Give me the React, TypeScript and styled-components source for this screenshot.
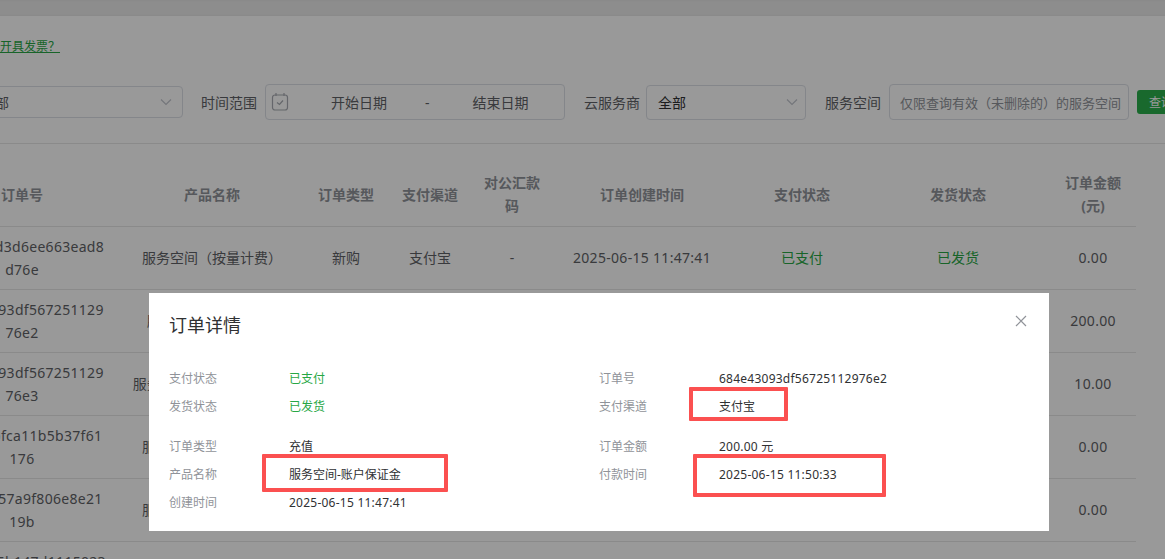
import React from "react";
import styled, { createGlobalStyle } from "styled-components";

const Global = createGlobalStyle`
  html, body { margin: 0; padding: 0; background: #fff; }
  body { font-family: "Noto Sans", "Noto Sans CJK SC", sans-serif; color: #606266; }
`;

const Page = styled.div`
  position: relative;
  width: 1165px;
  height: 559px;
  overflow: hidden;
  background: #fff;
`;
const Content = styled.div`
  width: 1212px;
  margin-left: -76px;
`;
const TopBar = styled.div`
  height: 16px;
  margin-left: -10px;
  width: 1300px;
  background: linear-gradient(#e4e4e4 0, #ececec 2px, #ececec 13px, #e6e6e6 16px);
`;
const LinkRow = styled.div`
  display: flex;
  align-items: center;
  height: 20px;
  margin-top: 20px;
  padding-left: 52px;
  font-size: 12px;
`;
const HelpLink = styled.a`
  color: #28a745;
  text-decoration: underline;
`;
const FilterBar = styled.div`
  display: flex;
  align-items: center;
  height: 88px;
  width: 1300px;
  box-sizing: border-box;
  padding: 5px 0 0 45px;
  border-bottom: 1px solid #e6e6e6;
  font-size: 14px;
`;
const Label = styled.span<{ $left: number }>`
  margin-left: ${(p) => p.$left}px;
  white-space: nowrap;
  line-height: 20px;
  position: relative;
  top: 1px;
`;
const SelectBox = styled.div<{ $w: number; $h: number; $pr: number; $left?: number; $dark?: boolean }>`
  display: flex;
  align-items: center;
  justify-content: space-between;
  box-sizing: border-box;
  width: ${(p) => p.$w}px;
  height: ${(p) => p.$h}px;
  margin-left: ${(p) => p.$left ?? 0}px;
  padding: 0 ${(p) => p.$pr}px 0 11px;
  border: 1px solid #dcdfe6;
  border-radius: 4px;
  color: ${(p) => (p.$dark ? "#303133" : "#606266")};
  background: #fff;
`;
const DateBox = styled.div`
  display: flex;
  align-items: center;
  box-sizing: border-box;
  width: 300px;
  height: 36px;
  margin-left: 8px;
  padding-left: 5px;
  border: 1px solid #dcdfe6;
  border-radius: 4px;
`;
const DateText = styled.span<{ $left: number }>`
  margin-left: ${(p) => p.$left}px;
  white-space: nowrap;
`;
const SearchInput = styled.div`
  display: flex;
  align-items: center;
  box-sizing: border-box;
  width: 240px;
  height: 36px;
  margin-left: 8px;
  padding-left: 10px;
  border: 1px solid #dcdfe6;
  border-radius: 4px;
  color: #909399;
  font-size: 13px;
  white-space: nowrap;
  overflow: hidden;
`;
const SearchButton = styled.button`
  flex: none;
  width: 56px;
  height: 24px;
  margin-left: 8px;
  padding: 0 0 0 12px;
  border: 0;
  border-radius: 3px;
  background: #2ab04c;
  color: #fff;
  font: inherit;
  font-size: 12px;
  text-align: left;
`;
const Table = styled.table`
  width: 1212px;
  margin-top: 19px;
  table-layout: fixed;
  border-collapse: collapse;
  font-size: 14px;
`;
const HeadCell = styled.th<{ $w: number; $first?: boolean }>`
  width: ${(p) => p.$w}px;
  height: 63px;
  padding: 0 6px 0 ${(p) => (p.$first ? 12 : 6)}px;
  box-sizing: border-box;
  border-bottom: 1px solid #e6e6e6;
  color: #909399;
  font-weight: 700;
  line-height: 23px;
  text-align: center;
`;
const Row = styled.tr`
  height: 63px;
`;
const Cell = styled.td<{ $green?: boolean; $num?: boolean; $first?: boolean }>`
  padding: 0 0 0 ${(p) => (p.$first ? 6 : 0)}px;
  box-sizing: border-box;
  border-bottom: 1px solid #e6e6e6;
  color: ${(p) => (p.$green ? "#28a745" : "#606266")};
  line-height: 23px;
  letter-spacing: ${(p) => (p.$num ? "0.3px" : "0")};
  text-align: center;
  white-space: nowrap;
`;
const Overlay = styled.div`
  position: absolute;
  inset: 0;
  background: rgba(0, 0, 0, 0.4);
`;
const Modal = styled.div`
  position: absolute;
  left: 149px;
  top: 293px;
  width: 900px;
  height: 238px;
  box-sizing: border-box;
  padding: 20px 20px 0;
  background: #fff;
`;
const ModalTitle = styled.h2`
  margin: 0;
  height: 24px;
  font-size: 18px;
  font-weight: 400;
  line-height: 24px;
  color: #303133;
`;
const CloseButton = styled.button`
  position: absolute;
  top: 20px;
  right: 20px;
  display: flex;
  width: 16px;
  height: 16px;
  padding: 0;
  border: 0;
  background: none;
`;
const DetailGrid = styled.div`
  display: grid;
  grid-template-columns: 430px 430px;
  margin-top: 27px;
`;
const DetailGroup = styled.div<{ $gap?: boolean }>`
  display: flex;
  flex-direction: column;
  margin-top: ${(p) => (p.$gap ? 12 : 0)}px;
`;
const DetailRow = styled.div`
  display: flex;
  height: 28px;
  align-items: center;
  font-size: 12px;
`;
const DetailLabel = styled.span`
  width: 120px;
  color: #909399;
`;
const DetailValue = styled.span<{ $green?: boolean; $num?: boolean }>`
  color: ${(p) => (p.$green ? "#28a745" : "#303133")};
  letter-spacing: ${(p) => (p.$num ? "0.24px" : "0")};
`;
const Mark = styled.div<{ $x: number; $y: number; $w: number; $h: number }>`
  position: absolute;
  left: ${(p) => p.$x}px;
  top: ${(p) => p.$y}px;
  width: ${(p) => p.$w}px;
  height: ${(p) => p.$h}px;
  box-sizing: border-box;
  border: 4px solid #fb5050;
  border-radius: 1px;
`;

const Chevron = () => (
  <svg width="20" height="20" viewBox="0 0 20 20" fill="none" stroke="#c0c4cc" strokeWidth="1.1">
    <path d="M5 7.5 L10 12.5 L15 7.5" />
  </svg>
);
const CalendarIcon = () => (
  <svg width="18" height="20" viewBox="0 0 18 20" fill="none" stroke="#a8abb2" strokeWidth="1.2">
    <rect x="1.5" y="3" width="15" height="15" rx="2.5" />
    <path d="M5 1v3M13 1v3" />
    <path d="M6 10.5 L8.5 12.5 L12 8.5" />
  </svg>
);

const heads: [string, number][] = [
  ["订单号", 190],
  ["产品名称", 196],
  ["订单类型", 72],
  ["支付渠道", 96],
  ["对公汇款码", 68],
  ["订单创建时间", 192],
  ["支付状态", 128],
  ["发货状态", 184],
  ["订单金额(元)", 86],
];

const rows = [
  { a: "684e3f1d3d6ee663ead8", b: "d76e", name: "服务空间（按量计费）", type: "新购", amt: "0.00" },
  { a: "684e43093df567251129", b: "76e2", name: "服务空间-账户保证金", type: "充值", amt: "200.00" },
  { a: "684e43093df567251129", b: "76e3", name: "服务空间-账户保证金充值", type: "充值", amt: "10.00" },
  { a: "684e3bbfca11b5b37f61", b: "176", name: "服务空间（按量计费）", type: "新购", amt: "0.00" },
  { a: "684e2c157a9f806e8e21", b: "19b", name: "服务空间（按量计费）", type: "新购", amt: "0.00" },
  { a: "684e2b15b147d1115023", b: "a1c", name: "服务空间（按量计费）", type: "新购", amt: "0.00" },
];

export default function App() {
  return (
    <Page>
      <Global />
      <Content>
        <TopBar />
        <LinkRow>
          <HelpLink>如何开具发票？</HelpLink>
        </LinkRow>
        <FilterBar>
          <SelectBox $w={214} $h={32} $pr={6}>
            全部
            <Chevron />
          </SelectBox>
          <Label $left={18}>时间范围</Label>
          <DateBox>
            <CalendarIcon />
            <DateText $left={42}>开始日期</DateText>
            <DateText $left={38}>-</DateText>
            <DateText $left={43}>结束日期</DateText>
          </DateBox>
          <Label $left={19}>云服务商</Label>
          <SelectBox $w={160} $h={35} $pr={3} $left={6} $dark>
            全部
            <Chevron />
          </SelectBox>
          <Label $left={19}>服务空间</Label>
          <SearchInput>仅限查询有效（未删除的）的服务空间</SearchInput>
          <SearchButton>查询</SearchButton>
        </FilterBar>
        <Table>
          <thead>
            <tr>
              {heads.map(([t, w], i) => (
                <HeadCell key={t} $w={w} $first={i === 0}>
                  {t}
                </HeadCell>
              ))}
            </tr>
          </thead>
          <tbody>
            {rows.map((r, i) => (
              <Row key={i}>
                <Cell $num $first>
                  {r.a}
                  <br />
                  {r.b}
                </Cell>
                <Cell>{r.name}</Cell>
                <Cell>{r.type}</Cell>
                <Cell>支付宝</Cell>
                <Cell>-</Cell>
                <Cell $num>2025-06-15 11:47:41</Cell>
                <Cell $green>已支付</Cell>
                <Cell $green>已发货</Cell>
                <Cell $num>{r.amt}</Cell>
              </Row>
            ))}
          </tbody>
        </Table>
      </Content>
      <Overlay />
      <Modal>
        <ModalTitle>订单详情</ModalTitle>
        <CloseButton aria-label="关闭">
          <svg width="16" height="16" viewBox="0 0 16 16" fill="none" stroke="#909399" strokeWidth="1.2">
            <path d="M3 3 L13 13 M13 3 L3 13" />
          </svg>
        </CloseButton>
        <DetailGrid>
          <div>
            <DetailGroup>
              <DetailRow><DetailLabel>支付状态</DetailLabel><DetailValue $green>已支付</DetailValue></DetailRow>
              <DetailRow><DetailLabel>发货状态</DetailLabel><DetailValue $green>已发货</DetailValue></DetailRow>
            </DetailGroup>
            <DetailGroup $gap>
              <DetailRow><DetailLabel>订单类型</DetailLabel><DetailValue>充值</DetailValue></DetailRow>
              <DetailRow><DetailLabel>产品名称</DetailLabel><DetailValue>服务空间-账户保证金</DetailValue></DetailRow>
              <DetailRow><DetailLabel>创建时间</DetailLabel><DetailValue $num>2025-06-15 11:47:41</DetailValue></DetailRow>
            </DetailGroup>
          </div>
          <div>
            <DetailGroup>
              <DetailRow><DetailLabel>订单号</DetailLabel><DetailValue $num>684e43093df56725112976e2</DetailValue></DetailRow>
              <DetailRow><DetailLabel>支付渠道</DetailLabel><DetailValue>支付宝</DetailValue></DetailRow>
            </DetailGroup>
            <DetailGroup $gap>
              <DetailRow><DetailLabel>订单金额</DetailLabel><DetailValue $num>200.00 元</DetailValue></DetailRow>
              <DetailRow><DetailLabel>付款时间</DetailLabel><DetailValue $num>2025-06-15 11:50:33</DetailValue></DetailRow>
            </DetailGroup>
          </div>
        </DetailGrid>
      </Modal>
      <Mark $x={262} $y={454} $w={186} $h={38} />
      <Mark $x={689} $y={387} $w={99} $h={34} />
      <Mark $x={693} $y={454} $w={193} $h={43} />
    </Page>
  );
}
